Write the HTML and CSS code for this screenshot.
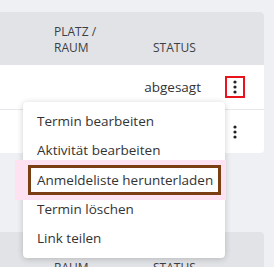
FILE: index.html
```html
<!DOCTYPE html>
<html lang="de">
<head>
  <meta charset="UTF-8">
  <meta name="viewport" content="width=device-width, initial-scale=1">
  <title>Termine</title>
  <link rel="stylesheet" href="styles.css">
</head>
<body>

  <div class="card">
    <div class="table-head">
      <div class="col-place">Platz /<br>Raum</div>
      <div class="col-status">Status</div>
    </div>
    <div class="row">
      <span class="status">abgesagt</span>
      <button class="dots marked-red" type="button" aria-label="Aktionen">
        <svg width="4" height="14" viewBox="0 0 4 14"><circle cx="2" cy="2" r="1.6"/><circle cx="2" cy="7" r="1.6"/><circle cx="2" cy="12" r="1.6"/></svg>
      </button>
    </div>
    <div class="row last">
      <button class="dots" type="button" aria-label="Aktionen">
        <svg width="4" height="14" viewBox="0 0 4 14"><circle cx="2" cy="2" r="1.6"/><circle cx="2" cy="7" r="1.6"/><circle cx="2" cy="12" r="1.6"/></svg>
      </button>
    </div>
  </div>

  <div class="card second">
    <div class="table-head">
      <div class="col-place">Platz /<br>Raum</div>
      <div class="col-status">Status</div>
    </div>
  </div>

  <ul class="menu">
    <li>Termin bearbeiten</li>
    <li>Aktivität bearbeiten</li>
    <li class="marked">Anmeldeliste herunterladen</li>
    <li>Termin löschen</li>
    <li>Link teilen</li>
  </ul>

</body>
</html>
```

FILE: styles.css
```css
body {
  background-color: #eef0f4;
  font-family: 'Open Sans', sans-serif;
  margin: 0;
  padding: 12px 0 0;
  height: 267px;
  box-sizing: border-box;
  overflow: hidden;
  position: relative;
  color: #333;
}
.card {
  width: 264px;
  background: #fff;
  border-radius: 0 4px 4px 0;
  overflow: hidden;
}
.card.second {
  margin-top: 79px;
}
.table-head {
  display: flex;
  align-items: flex-end;
  background: #e2e3e6;
  height: 53px;
  box-sizing: border-box;
  padding: 0 0 9px 54px;
  font-size: 12px;
  line-height: 16px;
  text-transform: uppercase;
  color: #3b4047;
}
.col-place {
  width: 99px;
}
.row {
  display: flex;
  align-items: center;
  justify-content: flex-end;
  gap: 24px;
  height: 44px;
  padding-right: 19px;
  border-bottom: 1px solid #e6e7ea;
  font-size: 13.5px;
}
.row.last {
  height: 43px;
  border-bottom: none;
}
.dots {
  width: 20px;
  height: 22px;
  padding: 0;
  border: 2px solid transparent;
  background: none;
  display: flex;
  align-items: center;
  justify-content: center;
  fill: #222;
}
.dots.marked-red {
  border-color: #e8141c;
}
.menu {
  position: absolute;
  left: 23px;
  top: 102px;
  width: 202px;
  height: 156px;
  box-sizing: border-box;
  margin: 0;
  padding: 5px 0;
  list-style: none;
  background: #fff;
  border-radius: 4px;
  box-shadow: 0 1px 6px rgba(0, 0, 0, 0.2);
  font-size: 13.5px;
  color: #333;
}
.menu li {
  height: 29px;
  line-height: 29px;
  padding-left: 14px;
  white-space: nowrap;
}
.menu li.marked {
  height: 30px;
  line-height: 24px;
  box-sizing: border-box;
  margin: 0 4px 0 5px;
  padding-left: 6px;
  border: 3px solid #7b3f14;
  background: #fff;
  box-shadow: 0 0 0 5px #fde3f1, -8px 0 0 5px #fde3f1;
}
```
